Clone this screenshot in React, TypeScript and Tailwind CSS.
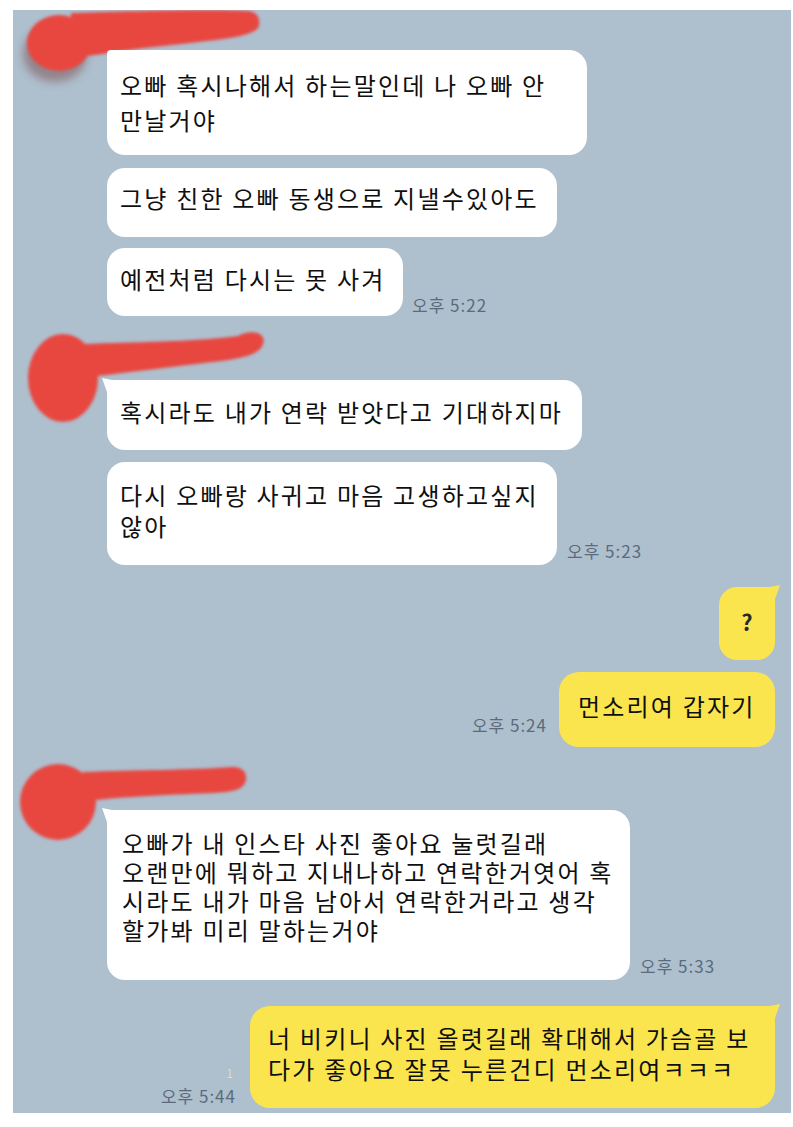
import React from 'react';

// 빨간 낙서 (프로필 가림)
function Scribble({ kind }: { kind: 1 | 2 | 3 }) {
  const id = `blur${kind}`;
  return (
    <svg width="260" height="110" viewBox="0 0 260 110" className="absolute left-0 top-0 pointer-events-none">
      <defs>
        <filter id={id} x="-20%" y="-20%" width="140%" height="140%">
          <feGaussianBlur stdDeviation="1.6" />
        </filter>
        <filter id={`${id}b`} x="-30%" y="-30%" width="160%" height="160%">
          <feGaussianBlur stdDeviation="4" />
        </filter>
      </defs>
      {kind === 1 && (
        <g>
          <ellipse cx="42" cy="44" rx="32" ry="28" fill="#7a4a4a" opacity="0.5" filter={`url(#${id}b)`} />
          <g filter={`url(#${id})`} fill="#e8463f">
            <ellipse cx="46" cy="33" rx="32" ry="28" />
            <path d="M58 3 C120 1, 200 -1, 236 1 Q248 3, 246 16 C242 28, 200 30, 150 36 C110 40, 80 46, 58 48 Z" />
          </g>
        </g>
      )}
      {kind === 2 && (
        <g filter={`url(#${id})`} fill="#e8463f">
          <ellipse cx="50" cy="48" rx="35" ry="44" />
          <path d="M70 14 C120 12, 180 12, 225 6 C240 -2, 254 4, 250 14 C247 24, 232 28, 200 32 C150 38, 100 44, 70 48 Z" />
        </g>
      )}
      {kind === 3 && (
        <g filter={`url(#${id})`} fill="#e8463f">
          <circle cx="45" cy="42" r="38" />
          <path d="M70 12 C120 10, 180 10, 218 7 C230 6, 234 13, 233 20 C231 30, 220 32, 200 33 C150 35, 100 37, 70 42 Z" />
        </g>
      )}
    </svg>
  );
}

function LeftTail({ color }: { color: string }) {
  return (
    <svg width="10" height="14" viewBox="0 0 10 14" className="absolute -left-[5px] -top-[2px]">
      <path d="M0 0 L10 2 L10 14 L5 14 Z" fill={color} />
    </svg>
  );
}

function RightTail({ color }: { color: string }) {
  return (
    <svg width="10" height="14" viewBox="0 0 10 14" className="absolute -right-[5px] -top-[2px]">
      <path d="M10 0 L0 2 L0 14 L5 14 Z" fill={color} />
    </svg>
  );
}

function Time({ children }: { children: React.ReactNode }) {
  return (
    <span className="text-[17px] tracking-[1px] leading-none text-[#5b6b7b] whitespace-nowrap">{children}</span>
  );
}

export default function App() {
  return (
    <div className="min-h-screen bg-white pt-[10px] pl-[13px] font-['Noto_Sans_CJK_KR','Noto_Sans',sans-serif]">
      <div className="w-[778px] h-[1103px] bg-[#aebfce] overflow-hidden flex flex-col">
        {/* 그룹 1 */}
        <div className="relative pt-[40px]">
          <Scribble kind={1} />
          <div className="ml-[94px] flex flex-col">
            <div className="relative w-[480px] h-[105px] bg-white rounded-[18px] rounded-tl-[4px] pl-[13px] pt-[17px] text-[24px] leading-[35px] tracking-[2.2px] text-[#0f0f0f] whitespace-nowrap">
              오빠 혹시나해서 하는말인데 나 오빠 안<br />만날거야
            </div>
            <div className="mt-[13px] w-[450px] h-[69px] bg-white rounded-[18px] pl-[13px] pt-[12px] text-[24px] leading-[36px] tracking-[2.2px] text-[#0f0f0f] whitespace-nowrap">
              그냥 친한 오빠 동생으로 지낼수있아도
            </div>
            <div className="mt-[11px] flex items-end">
              <div className="w-[296px] h-[68px] bg-white rounded-[18px] pl-[13px] pt-[13px] text-[24px] leading-[36px] tracking-[2.2px] text-[#0f0f0f] whitespace-nowrap">
                예전처럼 다시는 못 사겨
              </div>
              <div className="ml-[9px] mb-[-1px]">
                <Time>오후 5:22</Time>
              </div>
            </div>
          </div>
        </div>

        {/* 그룹 2 */}
        <div className="relative mt-[14px] pt-[50px]">
          <Scribble kind={2} />
          <div className="ml-[94px] flex flex-col">
            <div className="relative w-[475px] h-[70px] bg-white rounded-[18px] rounded-tl-[2px] pl-[13px] pt-[14px] text-[24px] leading-[36px] tracking-[2.2px] text-[#0f0f0f] whitespace-nowrap">
              <LeftTail color="#ffffff" />
              혹시라도 내가 연락 받앗다고 기대하지마
            </div>
            <div className="mt-[12px] flex items-end">
              <div className="w-[450px] h-[103px] bg-white rounded-[18px] pl-[13px] pt-[17px] text-[24px] leading-[31px] tracking-[2.2px] text-[#0f0f0f] whitespace-nowrap">
                다시 오빠랑 사귀고 마음 고생하고싶지<br />않아
              </div>
              <div className="ml-[10px] mb-[2px]">
                <Time>오후 5:23</Time>
              </div>
            </div>
          </div>
        </div>

        {/* 내 메시지 */}
        <div className="mt-[22px] pr-[16px] flex flex-col items-end">
          <div className="relative w-[56px] h-[73px] bg-[#fbe54e] rounded-[18px] rounded-tr-[2px] flex items-center justify-center pb-[4px] text-[22px] font-bold text-[#2a2a2a]">
            <RightTail color="#fbe54e" />
            ?
          </div>
          <div className="mt-[12px] flex items-end">
            <div className="mr-[12px] mb-[10px]">
              <Time>오후 5:24</Time>
            </div>
            <div className="w-[216px] h-[75px] bg-[#fbe54e] rounded-[20px] pl-[19px] pt-[16px] text-[24px] leading-[36px] tracking-[2.2px] text-[#0f0f0f] whitespace-nowrap">
              먼소리여 갑자기
            </div>
          </div>
        </div>

        {/* 그룹 3 */}
        <div className="relative mt-[13px] pt-[50px]">
          <Scribble kind={3} />
          <div className="ml-[94px] flex items-end">
            <div className="relative w-[523px] h-[170px] bg-white rounded-[18px] rounded-tl-[2px] pl-[15px] pt-[18px] text-[24px] leading-[29px] tracking-[2.2px] text-[#0f0f0f] whitespace-nowrap">
              <LeftTail color="#ffffff" />
              오빠가 내 인스타 사진 좋아요 눌럿길래<br />
              오랜만에 뭐하고 지내나하고 연락한거엿어 혹<br />
              시라도 내가 마음 남아서 연락한거라고 생각<br />
              할가봐 미리 말하는거야
            </div>
            <div className="ml-[10px] mb-[2px]">
              <Time>오후 5:33</Time>
            </div>
          </div>
        </div>

        {/* 마지막 내 메시지 */}
        <div className="mt-[26px] pr-[16px] flex justify-end items-end">
          <div className="mr-[14px] mb-[4px] flex flex-col items-end">
            <span className="text-[12px] leading-none text-[#dfe79a] mb-[8px] mr-[3px]">1</span>
            <Time>오후 5:44</Time>
          </div>
          <div className="relative w-[525px] h-[102px] bg-[#fbe54e] rounded-[20px] rounded-tr-[2px] pl-[18px] pt-[16px] text-[24px] leading-[31px] tracking-[2.2px] text-[#0f0f0f] whitespace-nowrap">
            <RightTail color="#fbe54e" />
            너 비키니 사진 올렷길래 확대해서 가슴골 보<br />다가 좋아요 잘못 누른건디 먼소리여ㅋㅋㅋ
          </div>
        </div>
      </div>
    </div>
  );
}
